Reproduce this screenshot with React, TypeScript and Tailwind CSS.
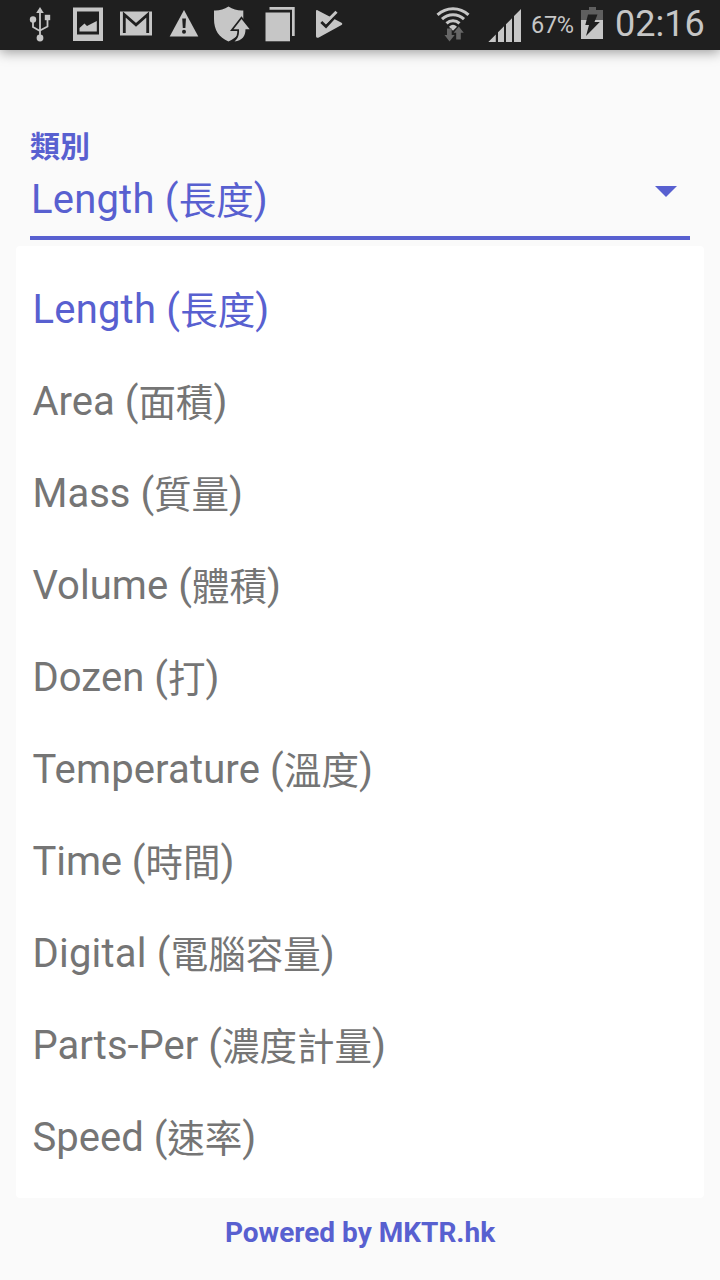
import { useState } from "react";

type Category = { name: string; zh: string; tracking: string };

const categories: Category[] = [
  { name: "Length", zh: "長度", tracking: "tracking-[0.2px]" },
  { name: "Area", zh: "面積", tracking: "tracking-normal" },
  { name: "Mass", zh: "質量", tracking: "tracking-normal" },
  { name: "Volume", zh: "體積", tracking: "tracking-[0.05px]" },
  { name: "Dozen", zh: "打", tracking: "tracking-[0.05px]" },
  { name: "Temperature", zh: "溫度", tracking: "tracking-[0.14px]" },
  { name: "Time", zh: "時間", tracking: "tracking-[-0.1px]" },
  { name: "Digital", zh: "電腦容量", tracking: "tracking-[0.2px]" },
  { name: "Parts-Per", zh: "濃度計量", tracking: "tracking-normal" },
  { name: "Speed", zh: "速率", tracking: "tracking-normal" },
];

function StatusBar() {
  return (
    <header className="flex h-[50px] shrink-0 items-start bg-[#1f1f1f] text-[#c6c6c6] shadow-[0_2px_12px_rgba(0,0,0,0.4)]">
      <svg width="360" height="50" viewBox="0 0 360 50" fill="#c6c6c6" aria-hidden="true">
        {/* USB */}
        <path d="M40 7l3.800 6h-7.600z" />
        <circle cx="33" cy="19.500" r="3.200" />
        <rect x="44.800" y="14.800" width="5.400" height="5.400" />
        <circle cx="40" cy="38" r="3.400" />
        <path d="M40 11v27M33 20v7l7 4M47.500 19v7.500l-7.500 4" fill="none" stroke="#c6c6c6" strokeWidth="1.800" />
        {/* Picture */}
        <path fillRule="evenodd" d="M73 7.500h30V41H73zM77 11.500v23h22v-23z" />
        <path d="M79.500 31.500v-3.500l5-4.500 2.500 2.500 9.800-5v10.500z" />
        {/* Mail */}
        <rect x="120" y="11.500" width="32" height="24" />
        <path d="M124.300 33V14.500L136 24.800l11.700-10.300V33" fill="none" stroke="#1f1f1f" strokeWidth="2.800" />
        {/* Warning */}
        <path d="M184 10l14.300 26.500h-28.600z" />
        <path d="M182.200 18.500h3.800l-.6 9.500h-2.600z" fill="#1f1f1f" />
        <circle cx="184" cy="31.800" r="2" fill="#1f1f1f" />
        {/* Shield with arrow */}
        <path d="M214 10.500c5 .3 10-1 14.500-4 4.500 3 9.500 4.300 14.800 4V19c0 11-5.300 18.500-14.800 22.500C219 37.500 214 30 214 19z" />
        <path d="M241.500 19l8.200 10.200h-4.200c0 7-3.500 11.300-10.500 12.300 3.200-3.200 4.300-7 4-12.300h-5.500z" fill="#c6c6c6" stroke="#1f1f1f" strokeWidth="3.400" />
        <path d="M241.500 19l8.200 10.200h-4.200c0 7-3.500 11.300-11 12.300 3.700-3.200 4.800-7 4.500-12.300h-5.500z" />
        {/* Windows */}
        <rect x="265.500" y="12.500" width="24.500" height="28.800" />
        <path d="M269.500 7h25.200v29H292V9.700h-22.500z" />
        {/* Play check */}
        <path d="M317.500 10.200l24 12.600c1 .6 1 1.700 0 2.300l-22.700 12.400c-1.700.8-2.800.1-2.800-1.500V11.500c0-1.300.6-1.800 1.500-1.300z" />
        <path d="M321.300 22l4.700 4.500 10.500-11.500" fill="none" stroke="#1f1f1f" strokeWidth="2.800" />
        <path d="M325.500 22.700l11-11" fill="none" stroke="#c6c6c6" strokeWidth="3" />
      </svg>
      <svg className="ml-[70px]" width="100" height="50" viewBox="430 0 100 50" fill="#c6c6c6" aria-hidden="true">
        <g fill="none" stroke="#c6c6c6" strokeWidth="3">
          <path d="M437.500 14.900a22.500 22.500 0 0 1 31 0" />
          <path d="M442 19.200a16 16 0 0 1 22 0" />
          <path d="M446.500 23.400a9.600 9.600 0 0 1 13 0" />
        </g>
        <path d="M449 26.700q4-4 8 0l-4 4z" />
        <path d="M447 28.500h4.700v6.500h3L449.500 41.500l-5-6.500h2.500zM456.200 39.500v-6.700h-2.600l5.200-6.300 5 6.300h-3v6.700z" fill="#666" />
        <path d="M488.300 42l7.500-7.500V42zM498 42v-9.700l6-6V42zM506 42V24.300l6-6V42zM514 42V16l7-7v33z" />
      </svg>
      <span className="ml-[1px] mt-[11px] w-[46px] whitespace-nowrap text-[23.500px] leading-7 tracking-[-0.300px]">67%</span>
      <svg className="ml-[3px]" width="24" height="50" viewBox="580 0 24 50" aria-hidden="true">
        <path d="M589 7h7v3h7v10h-22V10h8z" fill="#5f5f5f" />
        <path d="M581 20h22v19h-22z" fill="#c6c6c6" />
        <path d="M588 14.500h9.500l-3 7.500h5.300L586 36l3-11h-3.700z" fill="#1f1f1f" />
      </svg>
      <span className="ml-[11px] mt-[3px] whitespace-nowrap text-[36px] leading-[42px]">02:16</span>
    </header>
  );
}

function CategoryLabel({ name, zh, tracking }: Category) {
  return (
    <span className="flex h-[60px] items-baseline whitespace-pre text-[40px] leading-[60px]">
      <span className={tracking}>{name} (</span>
      <span className="translate-y-px text-[37.500px] leading-[60px]">{zh}</span>
      <span>)</span>
    </span>
  );
}

export default function App() {
  const [selected, setSelected] = useState(0);
  return (
    <div className="flex h-[1280px] w-[720px] flex-col overflow-hidden bg-[#fafafa] font-['Roboto','Noto_Sans_CJK_TC',sans-serif]">
      <StatusBar />
      <section className="mx-[30px] mt-[77px] flex h-[113px] shrink-0 flex-col border-b-4 border-[#5860d0] text-[#5860d0]">
        <span className="h-[40px] text-[30px] font-bold leading-[40px]">類別</span>
        <div className="flex items-start justify-between pl-px pt-[3px]">
          <CategoryLabel {...categories[selected]} />
          <svg className="mr-[13px] mt-[16px]" width="22" height="11" viewBox="0 0 22 11" aria-hidden="true">
            <path d="M0 0h22L11 11z" fill="#5860d0" />
          </svg>
        </div>
      </section>
      <ul className="mx-4 mt-[6px] flex h-[952px] shrink-0 flex-col rounded-[4px] bg-white pt-[18px]">
        {categories.map((category, i) => (
          <li key={category.name}>
            <button
              type="button"
              onClick={() => setSelected(i)}
              className={`flex h-[92px] w-full items-center pl-[16.500px] ${i === selected ? "text-[#5860d0]" : "text-[#757575]"}`}
            >
              <CategoryLabel {...category} />
            </button>
          </li>
        ))}
      </ul>
      <footer className="pt-[17px] text-center text-[28px] font-bold leading-9 text-[#5860d0]">Powered by MKTR.hk</footer>
    </div>
  );
}
